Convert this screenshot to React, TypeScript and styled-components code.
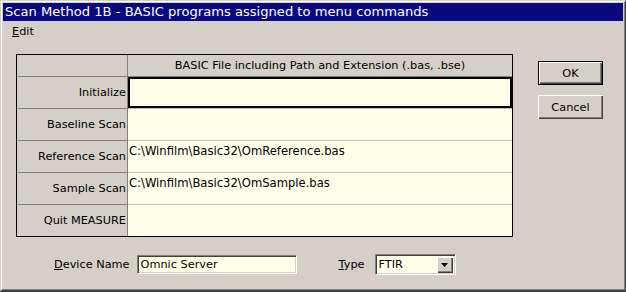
import styled, { createGlobalStyle } from "styled-components";

const GlobalStyle = createGlobalStyle`
  html, body {
    margin: 0;
    padding: 0;
    background: #d4d0c8;
  }
  body {
    font-family: "DejaVu Sans", Verdana, sans-serif;
  }
`;

const Window = styled.div`
  box-sizing: border-box;
  width: 626px;
  height: 292px;
  background: #d4d0c8;
  border-top: 1px solid #d4d0c8;
  border-left: 1px solid #d4d0c8;
  border-right: 1px solid #404040;
  border-bottom: 2px solid #404040;
  box-shadow: inset 1px 1px #fff, inset -1px -1px #808080;
  padding: 2px;
  display: flex;
  flex-direction: column;
`;

const TitleBar = styled.div`
  height: 18px;
  background: #0a0a80;
  color: #fff;
  font-size: 13.1px;
  line-height: 18px;
  padding-left: 2px;
  white-space: nowrap;
`;

const MenuBar = styled.div`
  height: 19px;
  display: flex;
  align-items: center;
  padding-left: 9px;
  font-size: 11.3px;
  color: #000;
`;

const MenuItem = styled.span`
  padding-top: 1px;
`;

const Body = styled.div`
  display: flex;
  align-items: flex-start;
  padding: 14px 0 0 13px;
`;

const Grid = styled.div`
  box-sizing: border-box;
  width: 497px;
  border: 1px solid #000;
  display: grid;
  grid-template-columns: 111px 1fr;
  font-size: 11.3px;
  color: #000;
`;

const HeadCell = styled.div<{ $corner?: boolean }>`
  height: 21px;
  background: #d4d0c8;
  border-bottom: 1px solid #808080;
  border-right: ${(p) => (p.$corner ? "1px solid #808080" : "none")};
  display: flex;
  align-items: center;
  justify-content: center;
`;

const LabelCell = styled.div<{ $last?: boolean }>`
  height: 31px;
  background: #d4d0c8;
  border-right: 1px solid #808080;
  border-bottom: ${(p) => (p.$last ? "none" : "1px solid #808080")};
  display: flex;
  align-items: center;
  justify-content: flex-end;
  padding-right: 1px;
  white-space: nowrap;
`;

const DataCell = styled.div<{ $last?: boolean; $focus?: boolean }>`
  box-sizing: border-box;
  height: ${(p) => (p.$last ? "31px" : "32px")};
  background: #ffffe8;
  border-bottom: ${(p) => (p.$last ? "none" : "1px solid #c0c0c0")};
  box-shadow: ${(p) => (p.$focus ? "inset 0 0 0 2px #000" : "none")};
  padding: 3px 0 0 1px;
  font-size: 11.6px;
  white-space: nowrap;
`;

const Buttons = styled.div`
  display: flex;
  flex-direction: column;
  gap: 10px;
  margin: 7px 0 0 25px;
`;

const Button = styled.button<{ $default?: boolean }>`
  box-sizing: border-box;
  width: 65px;
  height: 24px;
  padding: 0;
  background: #d4d0c8;
  font-family: "DejaVu Sans", Verdana, sans-serif;
  font-size: 11.3px;
  color: #000;
  border: ${(p) => (p.$default ? "1px solid #000" : "none")};
  box-shadow: inset 1px 1px #fff, inset -1px -1px #404040, inset -2px -2px #808080;
`;

const Footer = styled.div`
  display: flex;
  align-items: center;
  padding: 17px 0 0 51px;
  font-size: 11.3px;
  color: #000;
`;

const FieldLabel = styled.span<{ $gap?: number; $w?: number }>`
  margin-left: ${(p) => p.$gap ?? 0}px;
  margin-right: 7px;
  min-width: ${(p) => (p.$w ? `${p.$w}px` : "auto")};
  white-space: nowrap;
`;

const Sunken = styled.div<{ $w: number; $h: number }>`
  box-sizing: border-box;
  width: ${(p) => p.$w}px;
  height: ${(p) => p.$h}px;
  background: #ffffe8;
  border-top: 1px solid #808080;
  border-left: 1px solid #808080;
  border-right: 1px solid #fff;
  border-bottom: 1px solid #fff;
  box-shadow: inset 1px 1px #404040, inset -1px -1px #d4d0c8;
  display: flex;
  align-items: center;
  padding: 0 2px 0 3px;
  white-space: nowrap;
`;

const SelectText = styled.span`
  flex: 1;
`;

const DropButton = styled.div`
  box-sizing: border-box;
  width: 16px;
  height: 16px;
  background: #d4d0c8;
  box-shadow: inset 1px 1px #fff, inset -1px -1px #404040, inset -2px -2px #808080;
  display: flex;
  align-items: center;
  justify-content: center;
`;

const rows = [
  { label: "Initialize", file: "" },
  { label: "Baseline Scan", file: "" },
  { label: "Reference Scan", file: "C:\\Winfilm\\Basic32\\OmReference.bas" },
  { label: "Sample Scan", file: "C:\\Winfilm\\Basic32\\OmSample.bas" },
  { label: "Quit MEASURE", file: "" },
];

export default function App() {
  return (
    <>
      <GlobalStyle />
      <Window>
        <TitleBar>Scan Method 1B - BASIC programs assigned to menu commands</TitleBar>
        <MenuBar>
          <MenuItem>
            <u>E</u>dit
          </MenuItem>
        </MenuBar>
        <Body>
          <Grid>
            <HeadCell $corner />
            <HeadCell>BASIC File including Path and Extension (.bas, .bse)</HeadCell>
            {rows.map((r, i) => {
              const last = i === rows.length - 1;
              return [
                <LabelCell key={r.label + "l"} $last={last}>
                  {r.label}
                </LabelCell>,
                <DataCell key={r.label + "d"} $last={last} $focus={i === 0}>
                  {r.file}
                </DataCell>,
              ];
            })}
          </Grid>
          <Buttons>
            <Button $default>OK</Button>
            <Button>Cancel</Button>
          </Buttons>
        </Body>
        <Footer>
          <FieldLabel>
            <u>D</u>evice Name
          </FieldLabel>
          <Sunken $w={160} $h={19}>Omnic Server</Sunken>
          <FieldLabel $gap={42} $w={29}>
            <u>T</u>ype
          </FieldLabel>
          <Sunken $w={81} $h={21}>
            <SelectText>FTIR</SelectText>
            <DropButton>
              <svg width="7" height="4" viewBox="0 0 7 4">
                <path d="M0 0h7L3.5 4z" fill="#000" />
              </svg>
            </DropButton>
          </Sunken>
        </Footer>
      </Window>
    </>
  );
}
